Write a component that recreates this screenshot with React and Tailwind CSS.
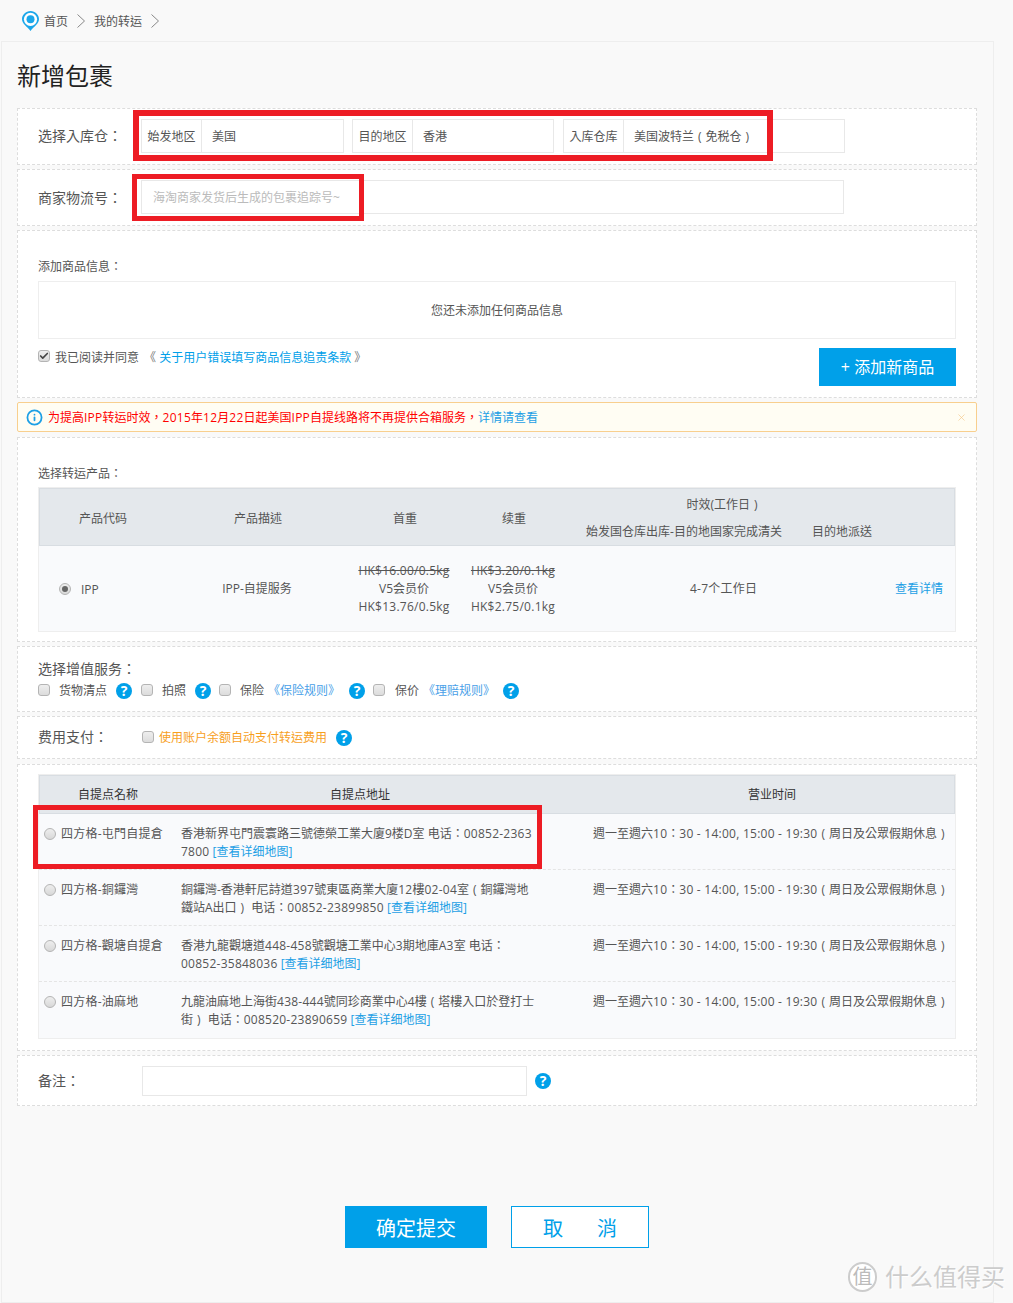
import React from 'react';
import { Check, Info, X } from 'lucide-react';

const pickupPoints = [
    {
        name: '四方格-屯門自提倉',
        line1: '香港新界屯門震寰路三號德榮工業大廈9楼D室 电话：00852-2363',
        line2: '7800',
    },
    {
        name: '四方格-銅鑼灣',
        line1: '銅鑼灣-香港軒尼詩道397號東區商業大廈12樓02-04室（銅鑼灣地',
        line2: '鐵站A出口） 电话：00852-23899850',
    },
    {
        name: '四方格-觀塘自提倉',
        line1: '香港九龍觀塘道448-458號觀塘工業中心3期地庫A3室 电话：',
        line2: '00852-35848036',
    },
    {
        name: '四方格-油麻地',
        line1: '九龍油麻地上海街438-444號同珍商業中心4樓（塔樓入口於登打士',
        line2: '街） 电话：008520-23890659',
    },
];

// Brackets sit centred with air around them, latin runs are a little wider than Open Sans
const Mixed = ({ text }) => (
    <>
        {text.split(/([（）]|[0-9A-Za-z$/.,:\- ]{2,})/).map((part, i) => {
            if (part === '（') return <span key={i} className="px-[4px]">(</span>;
            if (part === '）') return <span key={i} className="px-[4px]">)</span>;
            if (part.length > 1 && /^[0-9A-Za-z$/.,:\- ]+$/.test(part)) return <span key={i} className="tracking-[0.25px]">{part}</span>;
            return part;
        })}
    </>
);

const Card = ({ className = '', children }) => (
    <div className={`border border-dashed border-[#ddd] bg-white ${className}`}>{children}</div>
);

const CheckBox = ({ checked, className = '' }) => (
    <span className={`flex h-[12px] w-[12px] shrink-0 items-center justify-center rounded-[3px] border border-[#b4b4b4] bg-linear-to-b from-[#eee] to-[#dcdcdc] ${className}`}>
        {checked && <Check size={10} strokeWidth={4} className="text-[#444]" />}
    </span>
);

const Radio = ({ checked }) => (
    <span className="flex h-[12px] w-[12px] shrink-0 items-center justify-center rounded-full border border-[#b4b4b4] bg-linear-to-b from-[#eee] to-[#d8d8d8]">
        {checked && <span className="h-[6px] w-[6px] rounded-full bg-[#666]" />}
    </span>
);

const Help = ({ className = '' }) => (
    <span className={`flex h-[16px] w-[16px] shrink-0 items-center justify-center rounded-full bg-[#00a0e9] text-[14px] leading-none font-bold text-white ${className}`}>?</span>
);

const Crumb = () => (
    <svg width="8" height="14" viewBox="0 0 8 14" fill="none" stroke="#888" strokeWidth="1">
        <path d="M0.5 0.5 L7.5 7 L0.5 13.5" />
    </svg>
);

const SplitField = ({ label, value, className = '' }) => (
    <div className={`flex h-[34px] items-center border border-[#e8e8e8] bg-white ${className}`}>
        <span className="flex h-full w-[60px] shrink-0 items-center justify-center border-r border-[#e8e8e8] pt-[2px]">{label}</span>
        <span className="pl-[10px] pt-[2px] whitespace-nowrap"><Mixed text={value} /></span>
    </div>
);

export default function App() {
    return (
        <div className="relative h-[1303px] w-[1013px] overflow-hidden bg-[#f9f9f9] text-[12px] leading-[18px] text-[#555]" style={{ fontFamily: '"Open Sans", "Noto Sans CJK TC", sans-serif' }}>
            {/* Breadcrumb */}
            <div className="flex h-[41px] items-center pl-[22px]">
                <svg width="17" height="20" viewBox="0 0 17 20" className="mr-[5px]">
                    <path d="M8.5 0 C13.2 0 17 3.7 17 8.3 C17 12.6 12 15.6 8.5 20 C5 15.6 0 12.6 0 8.3 C0 3.7 3.8 0 8.5 0 Z" fill="#1ba7ea" />
                    <circle cx="8.5" cy="8.3" r="6.6" fill="#fff" />
                    <circle cx="8.5" cy="8.3" r="4" fill="#1ba7ea" />
                </svg>
                <span className="pt-[2px]">首页</span>
                <span className="mx-[9px]"><Crumb /></span>
                <span className="pt-[2px]">我的转运</span>
                <span className="mx-[9px]"><Crumb /></span>
            </div>

            <div className="ml-[1px] h-[1262px] w-[993px] border border-[#eee] pl-[15px]">
                <h1 className="flex h-[66px] items-center pt-[2px] text-[24px] leading-none font-normal text-[#222]">新增包裹</h1>

                <div className="flex w-[960px] flex-col gap-[4px]">
                    {/* Warehouse */}
                    <Card className="flex h-[57px] items-center pb-[2px] pl-[20px]">
                        <span className="w-[103px] text-[14px]">选择入库仓：</span>
                        <SplitField label="始发地区" value="美国" className="w-[203px]" />
                        <SplitField label="目的地区" value="香港" className="ml-[8px] w-[202px]" />
                        <SplitField label="入库仓库" value="美国波特兰（免税仓）" className="ml-[9px] w-[282px]" />
                    </Card>

                    {/* Tracking number */}
                    <Card className="flex h-[57px] items-center pb-[2px] pl-[20px]">
                        <span className="w-[103px] pt-[2px] text-[14px]">商家物流号：</span>
                        <div className="flex h-[34px] w-[703px] items-center border border-[#e8e8e8] pl-[11px] pt-[3px] text-[#bbb]">海淘商家发货后生成的包裹追踪号~</div>
                    </Card>

                    {/* Goods */}
                    <Card className="h-[168px] px-[20px] pt-[27px]">
                        <div>添加商品信息：</div>
                        <div className="mt-[5px] flex h-[58px] items-center justify-center border border-[#eee] pt-[2px]">您还未添加任何商品信息</div>
                        <div className="flex items-start justify-between">
                            <div className="mt-[10px] flex items-center">
                                <CheckBox checked className="mr-[5px] -translate-y-[2px]" />
                                <span>我已阅读并同意</span>
                                <span className="ml-[5px] text-[#00a0e9]"><span className="text-[#777]">《</span> 关于用户错误填写商品信息追责条款 <span className="text-[#777]">》</span></span>
                            </div>
                            <button className="mt-[9px] h-[38px] w-[137px] bg-[#00a0e9] text-[16px] text-white">+ 添加新商品</button>
                        </div>
                    </Card>

                    {/* Notice */}
                    <div className="mb-[1px] flex h-[30px] items-center rounded-[2px] border border-[#f8cf8e] bg-[#fffdf3] pl-[8px] pr-[9px]">
                        <Info size={17} strokeWidth={2.5} className="mr-[5px] text-[#1c9fe5]" />
                        <span className="pt-[2px] text-[#f00]"><Mixed text="为提高IPP转运时效，2015年12月22日起美国IPP自提线路将不再提供合箱服务，" /></span>
                        <span className="pt-[2px] text-[#1c9fe5]">详情请查看</span>
                        <X size={11} strokeWidth={1.5} className="ml-auto text-[#f5c98e]" />
                    </div>

                    {/* Products */}
                    <Card className="h-[205px] px-[20px] pt-[27px]">
                        <div>选择转运产品：</div>
                        <div className="mt-[4px] w-[918px] border border-[#eee]">
                            <div className="grid h-[58px] grid-cols-[126px_184px_110px_108px_386px] items-center border border-[#d8dde2] bg-[#e4e8ec] text-center">
                                <span className="pt-[3px]">产品代码</span>
                                <span className="pt-[3px]">产品描述</span>
                                <span className="pt-[3px]">首重</span>
                                <span className="pt-[3px]">续重</span>
                                <div className="grid h-full grid-cols-[232px_84px_70px] grid-rows-2">
                                    <span className="col-span-3 self-center pr-[74px] pt-[4px]"><Mixed text="时效(工作日）" /></span>
                                    <span className="self-center whitespace-nowrap pt-[1px]">始发国仓库出库-目的地国家完成清关</span>
                                    <span className="self-center whitespace-nowrap pt-[1px]">目的地派送</span>
                                </div>
                            </div>
                            <div className="grid h-[85px] grid-cols-[126px_184px_110px_108px_388px] items-center bg-[#f9fafc] text-center">
                                <div className="flex items-center pl-[20px]">
                                    <Radio checked />
                                    <span className="ml-[10px] pt-[2px]">IPP</span>
                                </div>
                                <span>IPP-自提服务</span>
                                <div className="whitespace-nowrap">
                                    <div className="line-through"><Mixed text="HK$16.00/0.5kg" /></div>
                                    <div>V5会员价</div>
                                    <div><Mixed text="HK$13.76/0.5kg" /></div>
                                </div>
                                <div className="whitespace-nowrap">
                                    <div className="line-through"><Mixed text="HK$3.20/0.1kg" /></div>
                                    <div>V5会员价</div>
                                    <div><Mixed text="HK$2.75/0.1kg" /></div>
                                </div>
                                <div className="flex items-center">
                                    <span className="ml-[123px] tracking-[0.25px]">4-7个工作日</span>
                                    <span className="ml-auto pr-[12px] text-[#1c9fe5]">查看详情</span>
                                </div>
                            </div>
                        </div>
                    </Card>

                    {/* Value added services */}
                    <Card className="h-[66px] pl-[20px] pt-[12px]">
                        <div className="text-[14px] leading-[20px]">选择增值服务：</div>
                        <div className="mt-[3px] flex items-center">
                            <CheckBox className="-translate-y-[1px]" />
                            <span className="ml-[9px]">货物清点</span>
                            <Help className="ml-[9px]" />
                            <CheckBox className="ml-[9px] -translate-y-[1px]" />
                            <span className="ml-[9px]">拍照</span>
                            <Help className="ml-[9px]" />
                            <CheckBox className="ml-[8px] -translate-y-[1px]" />
                            <span className="ml-[9px]">保险</span>
                            <span className="ml-[4px] text-[#4a9fe8]">《保险规则》</span>
                            <Help className="ml-[9px]" />
                            <CheckBox className="ml-[8px] -translate-y-[1px]" />
                            <span className="ml-[10px]">保价</span>
                            <span className="ml-[4px] text-[#4a9fe8]">《理赔规则》</span>
                            <Help className="ml-[8px]" />
                        </div>
                    </Card>

                    {/* Payment */}
                    <Card className="flex h-[43px] items-center pl-[20px]">
                        <span className="w-[104px] pb-[2px] text-[14px]">费用支付：</span>
                        <CheckBox className="-translate-y-[1px]" />
                        <span className="ml-[5px] text-[#f7a01e]">使用账户余额自动支付转运费用</span>
                        <Help className="ml-[9px]" />
                    </Card>

                    {/* Pickup points */}
                    <Card className="mt-[1px] h-[287px] px-[20px] pt-[9px]">
                        <div className="w-[918px] border border-[#eee]">
                            <div className="grid h-[39px] grid-cols-[136px_368px_410px] items-center border border-[#d8dde2] bg-[#e4e8ec] text-center text-[#333]">
                                <span>自提点名称</span>
                                <span>自提点地址</span>
                                <span className="pl-[46px]">营业时间</span>
                            </div>
                            {pickupPoints.map((point, index) => (
                                <div key={point.name} className={`grid h-[56px] grid-cols-[142px_412px_364px] items-start bg-[#f9fafc] pt-[11px] ${index < 3 ? 'border-b border-dashed border-[#e5e5e5]' : ''}`}>
                                    <div className="flex items-center pl-[5px]">
                                        <Radio />
                                        <span className="ml-[5px] tracking-[0.25px] whitespace-nowrap">{point.name}</span>
                                    </div>
                                    <div className="whitespace-nowrap">
                                        <div><Mixed text={point.line1} /></div>
                                        <div><Mixed text={point.line2} /> <span className="text-[#1c9fe5]">[查看详细地图]</span></div>
                                    </div>
                                    <span className="whitespace-nowrap"><Mixed text="週一至週六10：30 - 14:00, 15:00 - 19:30（周日及公眾假期休息）" /></span>
                                </div>
                            ))}
                        </div>
                    </Card>

                    {/* Remark */}
                    <Card className="flex h-[51px] items-center pl-[20px]">
                        <span className="w-[104px] text-[14px]">备注：</span>
                        <div className="h-[30px] w-[385px] border border-[#e8e8e8]" />
                        <Help className="ml-[8px]" />
                    </Card>
                </div>

                {/* Actions */}
                <div className="mt-[100px] flex w-[960px]">
                    <button className="ml-[328px] h-[42px] w-[142px] bg-[#00a0e9] pt-[3px] text-[20px] text-white">确定提交</button>
                    <button className="ml-[24px] h-[42px] w-[138px] border border-[#00a0e9] bg-white pt-[3px] text-[20px] text-[#00a0e9]">取<span className="ml-[34px]">消</span></button>
                </div>
            </div>

            {/* Red annotations drawn over the screenshot */}
            <div className="pointer-events-none absolute left-[133px] top-[110px] h-[51px] w-[640px] border-[6px] border-[#ed1c24]" />
            <div className="pointer-events-none absolute left-[132px] top-[174px] h-[47px] w-[232px] border-[5px] border-[#ed1c24]" />
            <div className="pointer-events-none absolute left-[33px] top-[805px] h-[64px] w-[509px] border-[5px] border-[#ed1c24]" />

            {/* Watermark */}
            <div className="pointer-events-none absolute left-[848px] top-[1262px] flex items-center">
                <span className="flex h-[30px] w-[29px] items-center justify-center rounded-full border-2 border-[#ccc] bg-white text-[20px] leading-none text-[#bbb]">值</span>
                <span className="ml-[8px] text-[24px] leading-none text-[#ccc] [text-shadow:1px_1px_0_#fff]">什么值得买</span>
            </div>
        </div>
    );
}
